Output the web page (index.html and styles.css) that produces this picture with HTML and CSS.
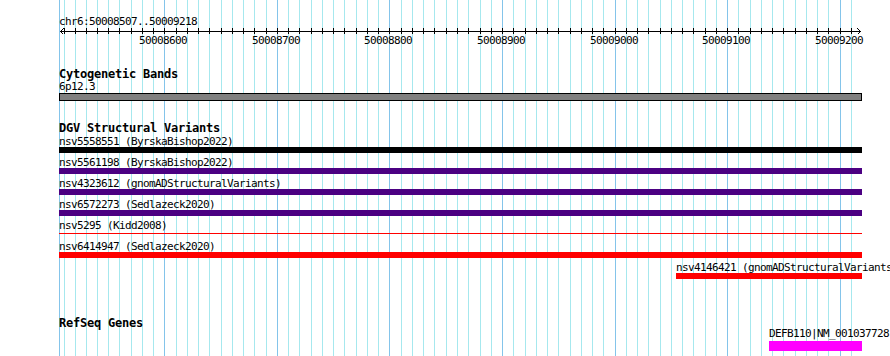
FILE: index.html
```html
<!DOCTYPE html>
<html lang="en">
<head>
<meta charset="utf-8">
<title>chr6:50008507..50009218</title>
<link rel="stylesheet" href="styles.css">
</head>
<body>
<div class="browser">
  <svg class="grid" width="890" height="356" viewBox="0 0 890 356" aria-hidden="true">
    <path class="grid-minor" d="M64.5 0V356M75.5 0V356M86.5 0V356M97.5 0V356M108.5 0V356M119.5 0V356M131.5 0V356M142.5 0V356M153.5 0V356M176.5 0V356M187.5 0V356M198.5 0V356M209.5 0V356M221.5 0V356M232.5 0V356M243.5 0V356M254.5 0V356M266.5 0V356M288.5 0V356M299.5 0V356M311.5 0V356M322.5 0V356M333.5 0V356M344.5 0V356M356.5 0V356M367.5 0V356M378.5 0V356M401.5 0V356M412.5 0V356M423.5 0V356M434.5 0V356M446.5 0V356M457.5 0V356M468.5 0V356M480.5 0V356M491.5 0V356M513.5 0V356M525.5 0V356M536.5 0V356M547.5 0V356M558.5 0V356M570.5 0V356M581.5 0V356M592.5 0V356M603.5 0V356M626.5 0V356M637.5 0V356M648.5 0V356M660.5 0V356M671.5 0V356M682.5 0V356M693.5 0V356M705.5 0V356M716.5 0V356M738.5 0V356M750.5 0V356M761.5 0V356M772.5 0V356M783.5 0V356M795.5 0V356M806.5 0V356M817.5 0V356M828.5 0V356M851.5 0V356"/>
    <path class="grid-major" d="M59.5 0V356M164.5 0V356M277.5 0V356M389.5 0V356M502.5 0V356M615.5 0V356M727.5 0V356M840.5 0V356"/>
  </svg>

  <div class="content">
    <div class="seg-label">chr6:50008507..50009218</div>
    <svg class="ruler" width="831" height="20" viewBox="59 0 831 20">
      <path class="axis" d="M60 3.5H861"/>
      <path class="axis" d="M63.5 0.5L60.5 3.5L63.5 6.5"/>
      <path class="axis" d="M857.5 0.5L860.5 3.5L857.5 6.5"/>
      <path class="ticks" d="M64.5 0V6M75.5 0V6M86.5 0V6M97.5 0V6M108.5 0V6M119.5 0V6M131.5 0V6M142.5 0V6M153.5 0V6M164.5 0V6M176.5 0V6M187.5 0V6M198.5 0V6M209.5 0V6M221.5 0V6M232.5 0V6M243.5 0V6M254.5 0V6M266.5 0V6M277.5 0V6M288.5 0V6M299.5 0V6M311.5 0V6M322.5 0V6M333.5 0V6M344.5 0V6M356.5 0V6M367.5 0V6M378.5 0V6M389.5 0V6M401.5 0V6M412.5 0V6M423.5 0V6M434.5 0V6M446.5 0V6M457.5 0V6M468.5 0V6M480.5 0V6M491.5 0V6M502.5 0V6M513.5 0V6M525.5 0V6M536.5 0V6M547.5 0V6M558.5 0V6M570.5 0V6M581.5 0V6M592.5 0V6M603.5 0V6M615.5 0V6M626.5 0V6M637.5 0V6M648.5 0V6M660.5 0V6M671.5 0V6M682.5 0V6M693.5 0V6M705.5 0V6M716.5 0V6M727.5 0V6M738.5 0V6M750.5 0V6M761.5 0V6M772.5 0V6M783.5 0V6M795.5 0V6M806.5 0V6M817.5 0V6M828.5 0V6M840.5 0V6M851.5 0V6"/>
      <text class="tick-label" x="139" y="16">50008600</text>
      <text class="tick-label" x="252" y="16">50008700</text>
      <text class="tick-label" x="364" y="16">50008800</text>
      <text class="tick-label" x="477" y="16">50008900</text>
      <text class="tick-label" x="590" y="16">50009000</text>
      <text class="tick-label" x="702" y="16">50009100</text>
      <text class="tick-label" x="815" y="16">50009200</text>
    </svg>

    <section class="track track-cyto">
      <h2 class="track-title">Cytogenetic Bands</h2>
      <div class="feature" style="margin-left:0;width:803px">
        <div class="flabel">6p12.3</div>
        <div class="bar bar-band"></div>
      </div>
    </section>

    <section class="track track-dgv">
      <h2 class="track-title">DGV Structural Variants</h2>
      <div class="feature row" style="margin-left:0;width:803px">
        <div class="flabel">nsv5558551 (ByrskaBishop2022)</div>
        <div class="bar bar-black"></div>
      </div>
      <div class="feature row" style="margin-left:0;width:803px">
        <div class="flabel">nsv5561198 (ByrskaBishop2022)</div>
        <div class="bar bar-indigo"></div>
      </div>
      <div class="feature row" style="margin-left:0;width:803px">
        <div class="flabel">nsv4323612 (gnomADStructuralVariants)</div>
        <div class="bar bar-indigo"></div>
      </div>
      <div class="feature row" style="margin-left:0;width:803px">
        <div class="flabel">nsv6572273 (Sedlazeck2020)</div>
        <div class="bar bar-indigo"></div>
      </div>
      <div class="feature row" style="margin-left:0;width:803px">
        <div class="flabel">nsv5295 (Kidd2008)</div>
        <div class="bar bar-thin"></div>
      </div>
      <div class="feature row" style="margin-left:0;width:803px">
        <div class="flabel">nsv6414947 (Sedlazeck2020)</div>
        <div class="bar bar-red"></div>
      </div>
      <div class="feature row" style="margin-left:617px;width:186px">
        <div class="flabel">nsv4146421 (gnomADStructuralVariants)</div>
        <div class="bar bar-red"></div>
      </div>
    </section>

    <section class="track track-refseq">
      <h2 class="track-title">RefSeq Genes</h2>
      <div class="feature" style="margin-left:710px;width:93px">
        <div class="flabel">DEFB110|NM_001037728</div>
        <div class="bar bar-gene"></div>
      </div>
    </section>
  </div>
</div>
</body>
</html>
```

FILE: styles.css
```css
html, body {
  margin: 0;
  padding: 0;
  background: #ffffff;
  overflow: hidden;
}

.browser {
  position: relative;
  isolation: isolate;
  width: 890px;
  height: 356px;
  overflow: hidden;
  background: #ffffff;
  font-family: "DejaVu Sans Mono", "Liberation Mono", monospace;
  color: #000000;
}

.grid {
  position: absolute;
  left: 0;
  top: 0;
  z-index: -1;
  display: block;
}

.grid path {
  fill: none;
  stroke-width: 1;
  shape-rendering: crispEdges;
}

.grid-minor {
  stroke: #a6e8ee;
}

.grid-major {
  stroke: #84c4ea;
}

.content {
  padding: 15px 0 0 59px;
}

.seg-label {
  font-size: 11px;
  line-height: 13px;
  height: 13px;
  letter-spacing: -0.622px;
  white-space: nowrap;
}

.ruler {
  display: block;
  overflow: visible;
}

.ruler .axis,
.ruler .ticks {
  fill: none;
  stroke: #000000;
  stroke-width: 1;
  shape-rendering: crispEdges;
}

.ruler .tick-label {
  font-family: "DejaVu Sans Mono", "Liberation Mono", monospace;
  font-size: 11px;
  letter-spacing: -0.622px;
  fill: #000000;
}

.track {
  display: flow-root;
  margin: 0;
}

.track-cyto {
  margin-top: 20px;
}

.track-dgv {
  margin-top: 21px;
}

.track-refseq {
  margin-top: 34px;
}

.track-title {
  margin: 0;
  font-size: 12px;
  font-weight: bold;
  line-height: 12px;
  height: 12px;
  letter-spacing: -0.225px;
  white-space: nowrap;
}

.track-cyto .track-title {
  margin-bottom: 1px;
}

.track-dgv .track-title {
  margin-bottom: 2px;
}

.track-refseq .track-title {
  margin-bottom: -1px;
}

.feature {
  display: flex;
  flex-direction: column;
}

.flabel {
  position: relative;
  z-index: 1;
  font-size: 11px;
  line-height: 11px;
  height: 11px;
  letter-spacing: -0.622px;
  white-space: nowrap;
}

.row {
  margin-bottom: 4px;
}

.bar {
  height: 6px;
}

.bar-band {
  margin-top: 1px;
  height: 8px;
  box-sizing: border-box;
  background: #808080;
  border: 1px solid #000000;
}

.bar-black {
  background: #000000;
}

.bar-indigo {
  background: #4b0082;
}

.bar-red {
  background: #ff0000;
}

.bar-thin {
  height: 1px;
  margin: 2px 0 3px;
  background: #ff0000;
}

.bar-gene {
  margin-top: 2px;
  height: 10px;
  background: #ff00ff;
}
```
